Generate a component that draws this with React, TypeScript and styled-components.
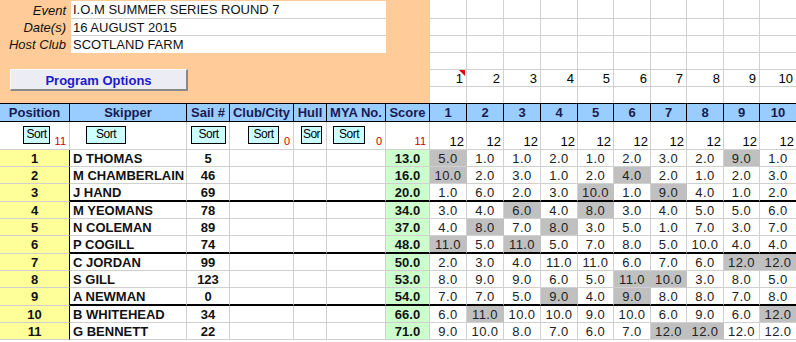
import styled, { createGlobalStyle } from "styled-components";

const GRID = "#d0d0d0";
const COLS =
  "70px 117px 43px 64px 33px 59px 44px 37px 37px 37px 37px 36px 37px 36px 37px 36px 37px";
const RACE_COLS = "37px 37px 37px 37px 36px 37px 36px 37px 36px 37px";

type Entry = {
  pos: number;
  name: string;
  sail: string;
  score: string;
  races: number[];
  drops: number[];
};

const entries: Entry[] = [
  { pos: 1, name: "D THOMAS", sail: "5", score: "13.0", races: [5, 1, 1, 2, 1, 2, 3, 2, 9, 1], drops: [0, 8] },
  { pos: 2, name: "M CHAMBERLAIN", sail: "46", score: "16.0", races: [10, 2, 3, 1, 2, 4, 2, 1, 2, 3], drops: [0, 5] },
  { pos: 3, name: "J HAND", sail: "69", score: "20.0", races: [1, 6, 2, 3, 10, 1, 9, 4, 1, 2], drops: [4, 6] },
  { pos: 4, name: "M YEOMANS", sail: "78", score: "34.0", races: [3, 4, 6, 4, 8, 3, 4, 5, 5, 6], drops: [2, 4] },
  { pos: 5, name: "N COLEMAN", sail: "89", score: "37.0", races: [4, 8, 7, 8, 3, 5, 1, 7, 3, 7], drops: [1, 3] },
  { pos: 6, name: "P COGILL", sail: "74", score: "48.0", races: [11, 5, 11, 5, 7, 8, 5, 10, 4, 4], drops: [0, 2] },
  { pos: 7, name: "C JORDAN", sail: "99", score: "50.0", races: [2, 3, 4, 11, 11, 6, 7, 6, 12, 12], drops: [8, 9] },
  { pos: 8, name: "S GILL", sail: "123", score: "53.0", races: [8, 9, 9, 6, 5, 11, 10, 3, 8, 5], drops: [5, 6] },
  { pos: 9, name: "A NEWMAN", sail: "0", score: "54.0", races: [7, 7, 5, 9, 4, 9, 8, 8, 7, 8], drops: [3, 5] },
  { pos: 10, name: "B WHITEHEAD", sail: "34", score: "66.0", races: [6, 11, 10, 10, 9, 10, 6, 9, 6, 12], drops: [1, 9] },
  { pos: 11, name: "G BENNETT", sail: "22", score: "71.0", races: [9, 10, 8, 7, 6, 7, 12, 12, 12, 12], drops: [6, 7] },
];

const rowHeights = [17, 17, 18, 17, 17, 18, 17, 17, 18, 17, 17];

const sortCells = [
  { offset: 23, width: 27, label: "Sort", count: "11" },
  { offset: 16, width: 40, label: "Sort" },
  { offset: 4, width: 35, label: "Sort" },
  { offset: 18, width: 31, label: "Sort", count: "0" },
  { offset: 7, width: 21, label: "Sor" },
  { offset: 6, width: 32, label: "Sort", count: "0" },
];

const headers = ["Position", "Skipper", "Sail #", "Club/City", "Hull", "MYA No.", "Score"];
const raceNums = [1, 2, 3, 4, 5, 6, 7, 8, 9, 10];

export default function App() {
  return (
    <>
      <GlobalStyle />
      <Sheet>
        <Top>
          <Panel>
            <InfoRow $h={18}>
              <Label>Event</Label>
              <Value $line>I.O.M SUMMER SERIES ROUND 7</Value>
            </InfoRow>
            <InfoRow $h={17}>
              <Label>Date(s)</Label>
              <Value $line>16 AUGUST 2015</Value>
            </InfoRow>
            <InfoRow $h={17}>
              <Label>Host Club</Label>
              <Value>SCOTLAND FARM</Value>
            </InfoRow>
            <ProgramButton>Program Options</ProgramButton>
          </Panel>
          <RaceGrid>
            {Array.from({ length: 6 }).map((_, r) =>
              raceNums.map((n) => (
                <GridCell key={`${r}-${n}`} $last={r === 5}>
                  {r === 4 && (
                    <>
                      {n === 1 && <Marker />}
                      {n}
                    </>
                  )}
                </GridCell>
              ))
            )}
          </RaceGrid>
        </Top>

        <Table>
          <Row $h={18}>
            {headers.map((h) => (
              <HeadCell key={h}>{h}</HeadCell>
            ))}
            {raceNums.map((n) => (
              <HeadCell key={n}>{n}</HeadCell>
            ))}
          </Row>

          <Row $h={28}>
            {sortCells.map((s, i) => (
              <SortCell key={i} $offset={s.offset}>
                <SortButton $w={s.width}>{s.label}</SortButton>
                {s.count && <Count>{s.count}</Count>}
              </SortCell>
            ))}
            <SortCell $offset={0}>
              <Count>11</Count>
            </SortCell>
            {raceNums.map((n) => (
              <SortCell key={n} $offset={0}>
                <RaceCount>12</RaceCount>
              </SortCell>
            ))}
          </Row>

          {entries.map((e, i) => {
            const thick = i === 2 || i === 5 || i === 8;
            return (
              <Row key={e.pos} $h={rowHeights[i]}>
                <PosCell>{e.pos}</PosCell>
                <Cell $thick={thick} $bold $align="flex-start">
                  {e.name}
                </Cell>
                <Cell $thick={thick} $bold>
                  {e.sail}
                </Cell>
                <Cell $thick={thick} />
                <Cell $thick={thick} />
                <Cell $thick={thick} />
                <Cell $thick={thick} $bold $bg="#ccffcc">
                  {e.score}
                </Cell>
                {e.races.map((r, j) => (
                  <RaceCell key={j} $thick={thick} $drop={e.drops.includes(j)}>
                    {r.toFixed(1)}
                  </RaceCell>
                ))}
              </Row>
            );
          })}
        </Table>
      </Sheet>
    </>
  );
}

const GlobalStyle = createGlobalStyle`
  html, body {
    margin: 0;
    padding: 0;
    background: #fff;
    overflow: hidden;
  }
  body {
    font-family: "Liberation Sans", Arial, sans-serif;
    font-size: 13px;
    color: #000;
  }
`;

const Sheet = styled.div`
  width: 797px;
  height: 342px;
  overflow: hidden;
`;

const Top = styled.div`
  display: flex;
  height: 103px;
`;

const Panel = styled.div`
  width: 430px;
  box-sizing: border-box;
  background: #ffcc99;
  border-right: 1px solid ${GRID};
  padding-top: 1px;
  display: flex;
  flex-direction: column;
`;

const InfoRow = styled.div<{ $h: number }>`
  display: flex;
  height: ${(p) => p.$h}px;
`;

const Label = styled.div`
  width: 71px;
  box-sizing: border-box;
  padding-right: 5px;
  font-style: italic;
  color: #111;
  display: flex;
  align-items: center;
  justify-content: flex-end;
`;

const Value = styled.div<{ $line?: boolean }>`
  width: 315px;
  box-sizing: border-box;
  background: #fff;
  padding-left: 2px;
  display: flex;
  align-items: center;
  border-bottom: ${(p) => (p.$line ? `1px solid ${GRID}` : "none")};
  color: #111;
`;

const ProgramButton = styled.div`
  margin: 16px 0 0 10px;
  width: 178px;
  height: 22px;
  box-sizing: border-box;
  background: #ececf4;
  border-top: 1px solid #fafafe;
  border-left: 1px solid #fafafe;
  border-right: 2px solid #8a8a8a;
  border-bottom: 2px solid #8a8a8a;
  color: #1a1acc;
  font-weight: bold;
  display: flex;
  align-items: center;
  justify-content: center;
  padding-top: 1px;
`;

const RaceGrid = styled.div`
  display: grid;
  grid-template-columns: ${RACE_COLS};
  grid-template-rows: 19px 17px 17px 17px 17px 16px;
`;

const GridCell = styled.div<{ $last: boolean }>`
  position: relative;
  box-sizing: border-box;
  border-right: 1px solid ${GRID};
  border-bottom: ${(p) => (p.$last ? "none" : `1px solid ${GRID}`)};
  display: flex;
  align-items: center;
  justify-content: flex-end;
  padding-right: 3px;
  padding-top: 1px;
`;

const Marker = styled.span`
  position: absolute;
  top: 0;
  right: 1px;
  width: 0;
  height: 0;
  border-top: 6px solid #e00000;
  border-left: 6px solid transparent;
`;

const Table = styled.div`
  border-top: 1px solid #000;
`;

const Row = styled.div<{ $h: number }>`
  display: grid;
  grid-template-columns: ${COLS};
  height: ${(p) => p.$h}px;
`;

const HeadCell = styled.div`
  box-sizing: border-box;
  background: #99ccff;
  border-right: 1px solid #000;
  border-bottom: 1px solid #000;
  color: #1a1a50;
  font-weight: bold;
  display: flex;
  align-items: center;
  justify-content: center;
  white-space: nowrap;
  overflow: hidden;
`;

const SortCell = styled.div<{ $offset: number }>`
  box-sizing: border-box;
  border-right: 1px solid ${GRID};
  border-bottom: 1px solid ${GRID};
  display: flex;
  align-items: flex-start;
  padding-left: ${(p) => p.$offset}px;
  padding-top: 4px;
  overflow: hidden;
`;

const SortButton = styled.div<{ $w: number }>`
  width: ${(p) => p.$w}px;
  height: 18px;
  box-sizing: border-box;
  flex-shrink: 0;
  background: #ccffff;
  border: 1px solid #000;
  font-size: 12px;
  letter-spacing: -0.5px;
  line-height: 15px;
  text-align: center;
  overflow: hidden;
  white-space: nowrap;
`;

const Count = styled.span`
  margin-left: auto;
  align-self: flex-end;
  color: #cc0000;
  font-size: 11px;
  line-height: 13px;
  padding: 0 3px 1px 0;
`;

const RaceCount = styled.span`
  margin-left: auto;
  align-self: flex-end;
  line-height: 15px;
  padding-right: 2px;
`;

const Cell = styled.div<{
  $thick?: boolean;
  $bold?: boolean;
  $bg?: string;
  $align?: string;
}>`
  box-sizing: border-box;
  background: ${(p) => p.$bg ?? "#fff"};
  border-right: 1px solid ${GRID};
  border-bottom: ${(p) => (p.$thick ? "2px solid #000" : `1px solid ${GRID}`)};
  font-weight: ${(p) => (p.$bold ? "bold" : "normal")};
  display: flex;
  align-items: center;
  justify-content: ${(p) => p.$align ?? "center"};
  padding-left: ${(p) => (p.$align === "flex-start" ? "3px" : "0")};
  white-space: nowrap;
  overflow: hidden;
  color: #111;
`;

const PosCell = styled.div`
  box-sizing: border-box;
  background: #ffff99;
  border-right: 1px solid #000;
  border-bottom: 1px solid ${GRID};
  font-weight: bold;
  display: flex;
  align-items: center;
  justify-content: center;
  color: #111;
`;

const RaceCell = styled.div<{ $thick: boolean; $drop: boolean }>`
  box-sizing: border-box;
  background: ${(p) => (p.$drop ? "#c0c0c0" : "#fff")};
  border-right: 1px solid ${(p) => (p.$drop ? "#c0c0c0" : GRID)};
  border-bottom: ${(p) => (p.$thick ? "2px solid #000" : `1px solid ${GRID}`)};
  display: flex;
  align-items: center;
  justify-content: center;
  letter-spacing: 0.4px;
  color: #222;
`;
